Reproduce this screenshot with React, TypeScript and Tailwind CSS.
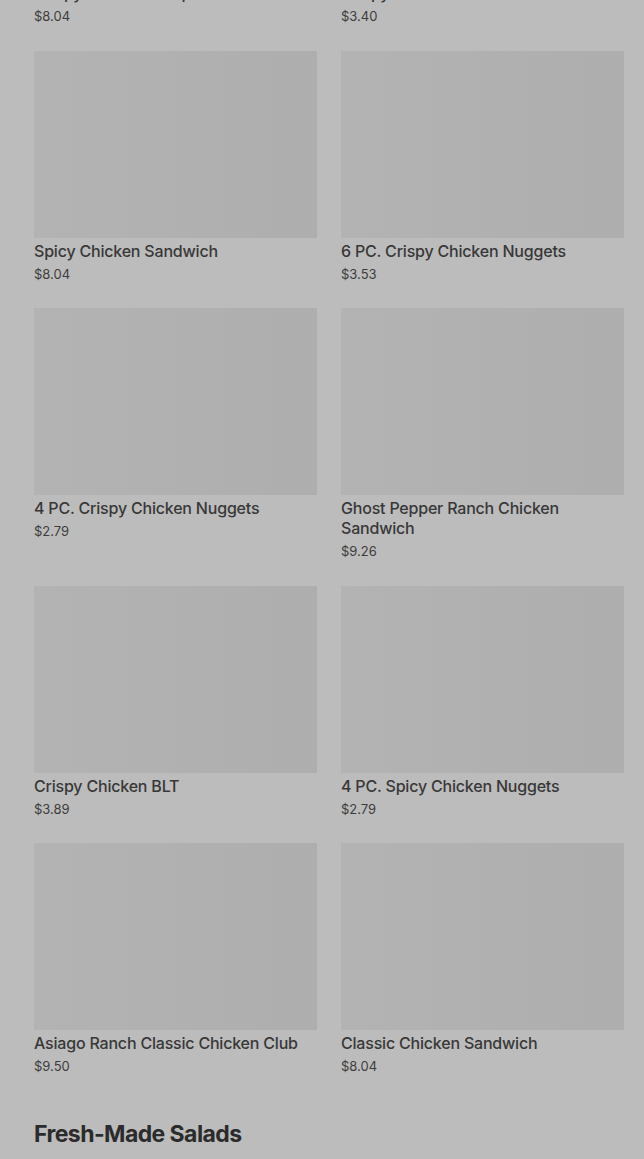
const items = [
  { name: "Crispy Chicken Wrap", price: "$8.04" },
  { name: "Crispy Chicken Sandwich", price: "$3.40" },
  { name: "Spicy Chicken Sandwich", price: "$8.04" },
  { name: "6 PC. Crispy Chicken Nuggets", price: "$3.53" },
  { name: "4 PC. Crispy Chicken Nuggets", price: "$2.79" },
  { name: "Ghost Pepper Ranch Chicken Sandwich", price: "$9.26" },
  { name: "Crispy Chicken BLT", price: "$3.89" },
  { name: "4 PC. Spicy Chicken Nuggets", price: "$2.79" },
  { name: "Asiago Ranch Classic Chicken Club", price: "$9.50" },
  { name: "Classic Chicken Sandwich", price: "$8.04" },
];

const MenuCard = ({ name, price }: { name: string; price: string }) => (
  <div className="flex flex-col">
    <div className="h-[187px] w-full bg-gradient-to-r from-[#b3b3b3] to-[#aeaeae]" />
    <div className="mt-[3px] text-[16px] leading-5 font-medium tracking-[-0.2px] text-[#383838]">{name}</div>
    <div className="mt-[3px] text-[13px] leading-5 text-[#3c3c3c]">{price}</div>
  </div>
);

export default function App() {
  return (
    <div
      className="min-h-[1159px] w-[644px] overflow-hidden bg-[#bcbcbc]"
      style={{ fontFamily: "Inter, 'Noto Sans', sans-serif" }}
    >
      <div className="-mt-[207px] pl-[34px] pr-[20px]">
        <div className="grid grid-cols-2 gap-x-6 gap-y-[24.5px]">
          {items.map((it) => (
            <MenuCard key={it.name} name={it.name} price={it.price} />
          ))}
        </div>
        <h2 className="mt-[42px] text-[23px] leading-8 font-bold tracking-tight text-[#2b2b2b]">
          Fresh-Made Salads
        </h2>
      </div>
    </div>
  );
}
